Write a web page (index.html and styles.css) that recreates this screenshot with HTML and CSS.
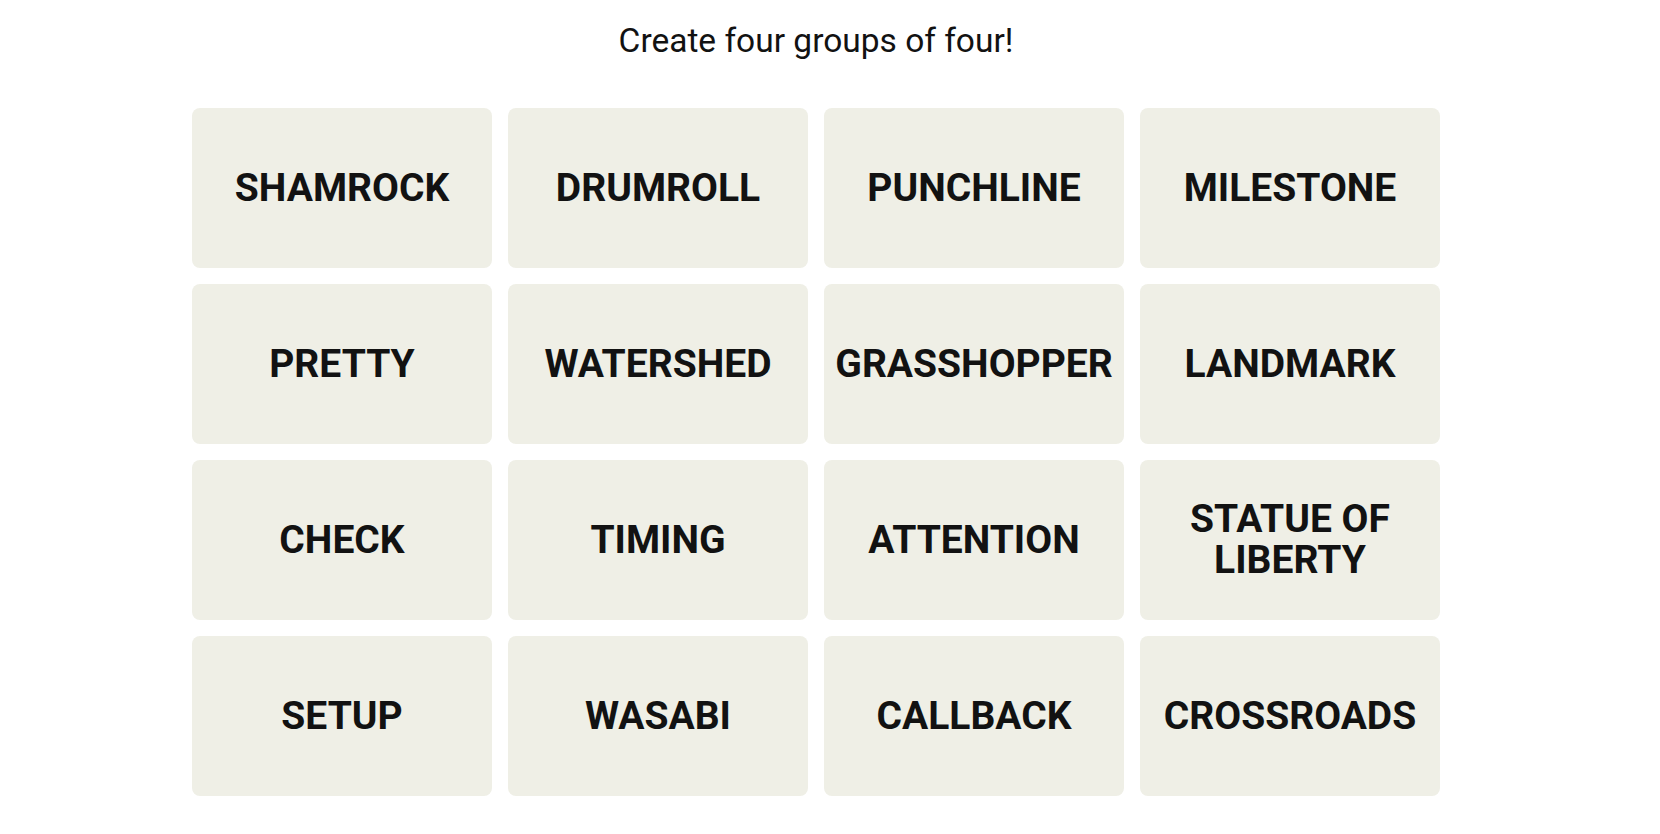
FILE: index.html
```html
<!DOCTYPE html>
<html lang="en">
<head>
<meta charset="utf-8">
<title>Connections</title>
<link rel="stylesheet" href="styles.css">
</head>
<body>
<main class="board">
  <h1 class="prompt">Create four groups of four!</h1>
  <section class="grid">
    <div class="tile">SHAMROCK</div>
    <div class="tile">DRUMROLL</div>
    <div class="tile">PUNCHLINE</div>
    <div class="tile">MILESTONE</div>
    <div class="tile">PRETTY</div>
    <div class="tile">WATERSHED</div>
    <div class="tile">GRASSHOPPER</div>
    <div class="tile">LANDMARK</div>
    <div class="tile">CHECK</div>
    <div class="tile">TIMING</div>
    <div class="tile">ATTENTION</div>
    <div class="tile">STATUE OF LIBERTY</div>
    <div class="tile">SETUP</div>
    <div class="tile">WASABI</div>
    <div class="tile">CALLBACK</div>
    <div class="tile">CROSSROADS</div>
  </section>
</main>
</body>
</html>
```

FILE: styles.css
```css
html, body {
  margin: 0;
  padding: 0;
  background: #ffffff;
}

body {
  font-family: Roboto, "Liberation Sans", Arial, sans-serif;
  color: #121212;
}

.board {
  width: 1248px;
  margin-left: 192px;
  padding-top: 21px;
  display: flex;
  flex-direction: column;
  gap: 47px;
}

.prompt {
  margin: 0;
  font-size: 33.5px;
  line-height: 40px;
  font-weight: 400;
  text-align: center;
  color: #121212;
}

.grid {
  display: grid;
  grid-template-columns: repeat(4, 300px);
  grid-auto-rows: 160px;
  gap: 16px;
}

.tile {
  background: #efefe6;
  border-radius: 8px;
  display: flex;
  align-items: center;
  justify-content: center;
  text-align: center;
  font-size: 39px;
  line-height: 41px;
  font-weight: 700;
  color: #121212;
  padding: 0 40px;
}
```
